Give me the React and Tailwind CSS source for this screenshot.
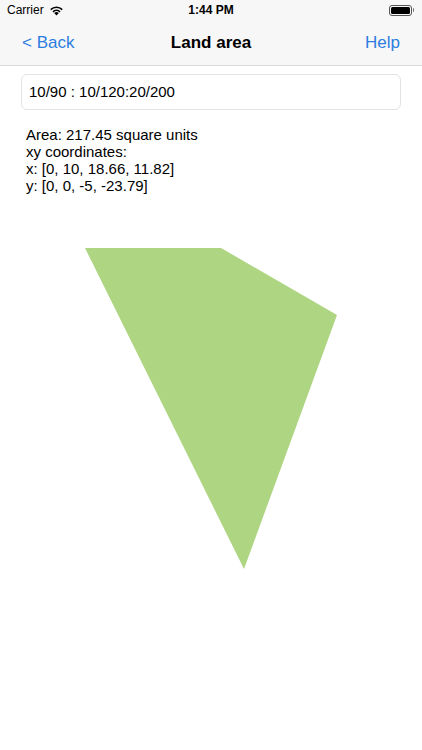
export default function App() {
  return (
    <div className="w-[422px] h-[750px] bg-white overflow-hidden" style={{ fontFamily: "'Liberation Sans', Arial, sans-serif" }}>
      <div className="bg-[#f7f7f7] border-b border-[#d8d8d8]">
        <div className="h-[20px] flex items-center justify-between px-[7px] relative">
          <div className="flex items-center gap-[5px] text-[12px] text-black">
            <span>Carrier</span>
            <svg width="15" height="11" viewBox="0 0 15 11">
              <path d="M7.5 10.5 L5.2 8.1 A3.3 3.3 0 0 1 9.8 8.1 Z" fill="#000" />
              <path d="M3.4 6.3 A5.8 5.8 0 0 1 11.6 6.3 L10.5 7.4 A4.3 4.3 0 0 0 4.5 7.4 Z" fill="#000" />
              <path d="M1.2 4.1 A8.9 8.9 0 0 1 13.8 4.1 L12.7 5.2 A7.4 7.4 0 0 0 2.3 5.2 Z" fill="#000" />
            </svg>
          </div>
          <span className="absolute left-1/2 -translate-x-1/2 text-[12px] font-bold text-black">1:44 PM</span>
          <div className="flex items-center mr-[1px]">
            <div className="w-[23px] h-[11px] border border-[#555] rounded-[3px] p-[1px]">
              <div className="w-full h-full bg-black rounded-[1.5px]" />
            </div>
            <div className="w-[1.5px] h-[4px] bg-[#777] rounded-r-sm ml-[1px]" />
          </div>
        </div>
        <div className="h-[45px] flex items-center justify-between px-[22px] relative">
          <span className="text-[17px] text-[#2c7de0]">&lt; Back</span>
          <span className="absolute left-1/2 -translate-x-1/2 text-[17px] font-bold text-black">Land area</span>
          <span className="text-[17px] text-[#2c7de0]">Help</span>
        </div>
      </div>
      <div className="px-[21px] pt-[8px]">
        <div className="h-[36px] border border-[#e3e3e3] rounded-[6px] flex items-center px-[7px] text-[15px] text-black">
          10/90 : 10/120:20/200
        </div>
        <div className="mt-[16px] px-[5px] text-[15px] leading-[17px] text-black">
          <div>Area: 217.45 square units</div>
          <div>xy coordinates:</div>
          <div>x: [0, 10, 18.66, 11.82]</div>
          <div>y: [0, 0, -5, -23.79]</div>
        </div>
      </div>
      <svg width="422" height="400" viewBox="0 0 422 400" className="block mt-[8px]">
        <polygon points="85,46 221,46 337,113 244,367" fill="#aed582" />
      </svg>
    </div>
  )
}
